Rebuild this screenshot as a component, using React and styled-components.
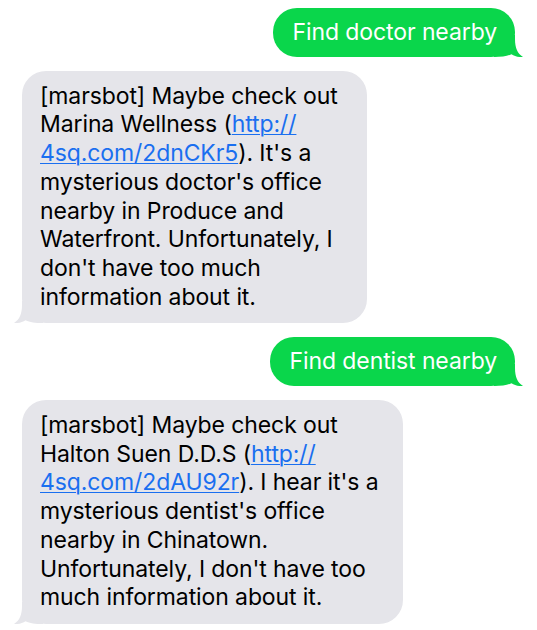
import React from 'react';
import styled, { createGlobalStyle } from 'styled-components';

const GlobalStyle = createGlobalStyle`
  html, body {
    margin: 0;
    padding: 0;
    background: #ffffff;
  }
  body {
    font-family: Inter, "Noto Sans", "Liberation Sans", sans-serif;
    -webkit-font-smoothing: antialiased;
  }
`;

const Thread = styled.div`
  display: flex;
  flex-direction: column;
  gap: 14px;
  padding: 8px 22px 8px 22px;
  width: 537px;
  box-sizing: border-box;
`;

const Row = styled.div`
  display: flex;
  justify-content: ${(p) => (p.$mine ? 'flex-end' : 'flex-start')};
`;

const Bubble = styled.div`
  position: relative;
  box-sizing: border-box;
  width: ${(p) => (p.$width ? `${p.$width}px` : 'auto')};
  background: ${(p) => (p.$mine ? '#0ad64b' : '#e5e5ea')};
  color: ${(p) => (p.$mine ? '#ffffff' : '#000000')};
  border-radius: 24px;
  padding: ${(p) => (p.$mine ? '10px 18px 10px 20px' : '11px 18px 12px 18px')};
  font-size: 23px;
  line-height: 28.7px;
  letter-spacing: -0.1px;
`;

const Text = styled.span`
  position: relative;
  z-index: 1;
`;

const Tail = styled.svg`
  position: absolute;
  z-index: 0;
  bottom: 0;
  width: 29px;
  height: 22px;
  ${(p) => (p.$mine ? 'right: -8px;' : 'left: -8px; transform: scaleX(-1);')}
`;

const Link = styled.a`
  color: #1a6ff0;
  text-decoration: underline;
  text-underline-offset: 2px;
  text-decoration-thickness: 1px;
`;

const BubbleTail = ({ mine }) => (
  <Tail $mine={mine} viewBox="0 0 29 22">
    <path
      d="M0 0 H21 V4 C21 13 23.5 18.5 29 22 C24.5 22.4 20.5 21.2 17.5 19.2 C13 21.3 8 22 0 22 Z"
      fill={mine ? '#0ad64b' : '#e5e5ea'}
    />
  </Tail>
);

const Outgoing = ({ children }) => (
  <Row $mine>
    <Bubble $mine>
      <BubbleTail mine />
      <Text>{children}</Text>
    </Bubble>
  </Row>
);

const Incoming = ({ width, children }) => (
  <Row>
    <Bubble $width={width}>
      <BubbleTail />
      <Text>{children}</Text>
    </Bubble>
  </Row>
);

export default function App() {
  return (
    <>
      <GlobalStyle />
      <Thread>
        <Outgoing>Find doctor nearby</Outgoing>
        <Incoming width={345}>
          [marsbot] Maybe check out
          <br />
          Marina Wellness (<Link href="#">http://</Link>
          <br />
          <Link href="#">4sq.com/2dnCKr5</Link>). It's a
          <br />
          mysterious doctor's office
          <br />
          nearby in Produce and
          <br />
          Waterfront. Unfortunately, I
          <br />
          don't have too much
          <br />
          information about it.
        </Incoming>
        <Outgoing>Find dentist nearby</Outgoing>
        <Incoming width={381}>
          [marsbot] Maybe check out
          <br />
          Halton Suen D.D.S (<Link href="#">http://</Link>
          <br />
          <Link href="#">4sq.com/2dAU92r</Link>). I hear it's a
          <br />
          mysterious dentist's office
          <br />
          nearby in Chinatown.
          <br />
          Unfortunately, I don't have too
          <br />
          much information about it.
        </Incoming>
      </Thread>
    </>
  );
}
